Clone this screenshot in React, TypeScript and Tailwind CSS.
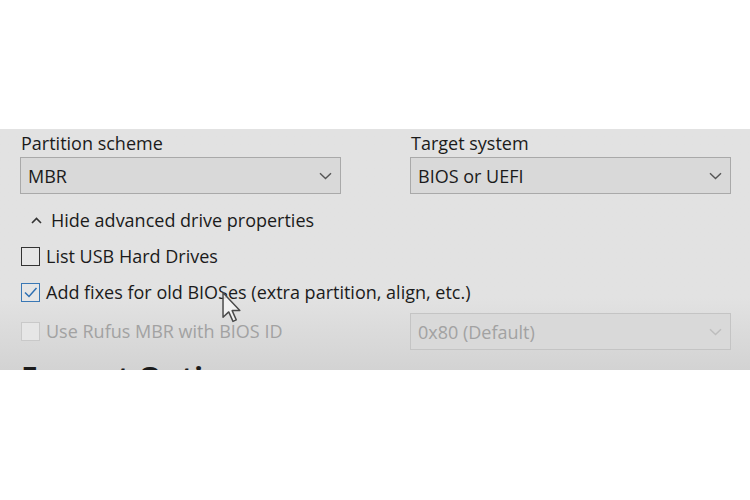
import React from "react";

const font = { fontFamily: '"Open Sans", "Noto Sans", sans-serif' };

function Chevron({ color = "#5a5a5a" }: { color?: string }) {
  return (
    <svg width="13" height="8" viewBox="0 0 13 8" fill="none">
      <path d="M1 1.2 L6.5 6.5 L12 1.2" stroke={color} strokeWidth="1.4" />
    </svg>
  );
}

function Dropdown({ value, disabled = false }: { value: string; disabled?: boolean }) {
  return (
    <div
      className={`flex h-[37px] items-center justify-between border pl-[7px] pr-[8px] ${
        disabled ? "border-[#c4c4c4] bg-[#d9d9d9] text-[#a2a2a2]" : "border-[#a9a9a9] bg-[#d9d9d9] text-[#1b1b1b]"
      }`}
    >
      <span className="text-[18px] leading-none">{value}</span>
      <Chevron color={disabled ? "#bdbdbd" : "#555555"} />
    </div>
  );
}

function Checkbox({ checked = false, disabled = false }: { checked?: boolean; disabled?: boolean }) {
  const border = disabled ? "border-[#c9c9c9]" : checked ? "border-[#3a78b5]" : "border-[#333333]";
  return (
    <div className={`relative h-[19px] w-[19px] shrink-0 border ${border} bg-[#e6e6e6]`}>
      {checked && (
        <svg className="absolute left-[1px] top-[1px]" width="15" height="15" viewBox="0 0 15 15" fill="none">
          <path d="M2 7.5 L6 11.5 L13.5 3" stroke="#2d6fb2" strokeWidth="1.5" />
        </svg>
      )}
    </div>
  );
}

export default function App() {
  return (
    <div className="h-[500px] w-[750px] bg-white" style={font}>
      <div className="h-[129px]" />
      <div className="relative h-[241px] overflow-hidden bg-gradient-to-b from-[#e2e2e2] from-70% to-[#d3d3d3] pl-[20px] pr-[19px]">
        <div className="grid grid-cols-[321px_321px] gap-x-[69px]">
          <div>
            <div className="flex h-[28px] items-center pl-[1px] text-[18px] text-[#1b1b1b]">Partition scheme</div>
            <Dropdown value="MBR" />
          </div>
          <div>
            <div className="flex h-[28px] items-center pl-[1px] text-[18px] text-[#1b1b1b]">Target system</div>
            <Dropdown value="BIOS or UEFI" />
          </div>
        </div>
        <div className="flex h-[44px] items-center pt-[8px] text-[18px] text-[#1b1b1b]">
          <div className="flex w-[31px] justify-center pl-[1px]">
            <svg width="11" height="7" viewBox="0 0 11 7" fill="none">
              <path d="M1 6 L5.5 1.5 L10 6" stroke="#333" strokeWidth="1.6" />
            </svg>
          </div>
          <span>Hide advanced drive properties</span>
        </div>
        <div className="flex h-[36px] items-center gap-[6px] pl-[1px] text-[18px] text-[#1b1b1b]">
          <Checkbox />
          <span>List USB Hard Drives</span>
        </div>
        <div className="flex h-[36px] items-center gap-[6px] pl-[1px] text-[18px] text-[#1b1b1b]">
          <Checkbox checked />
          <span>Add fixes for old BIOSes (extra partition, align, etc.)</span>
        </div>
        <div className="mt-[3px] grid h-[36px] grid-cols-[321px_321px] items-center gap-x-[69px]">
          <div className="flex items-center gap-[6px] pl-[1px] text-[18px] text-[#a2a2a2]">
            <Checkbox disabled />
            <span>Use Rufus MBR with BIOS ID</span>
          </div>
          <Dropdown value="0x80 (Default)" disabled />
        </div>
        <div className="mt-[14px] pl-[1px] text-[30px] font-bold leading-none text-[#1b1b1b]">Format Options</div>
        <svg className="absolute left-[222px] top-[163px]" width="20" height="31" viewBox="0 0 12 19" fill="none">
          <path
            d="M0.5 0.5 L0.5 15.5 L4 12.2 L6.6 18 L8.6 17.1 L6.1 11.4 L10.8 11.4 Z"
            fill="#f4f4f4"
            fillOpacity="0.85"
            stroke="#4a4a4a"
            strokeWidth="0.9"
            strokeLinejoin="round"
          />
        </svg>
      </div>
    </div>
  );
}
